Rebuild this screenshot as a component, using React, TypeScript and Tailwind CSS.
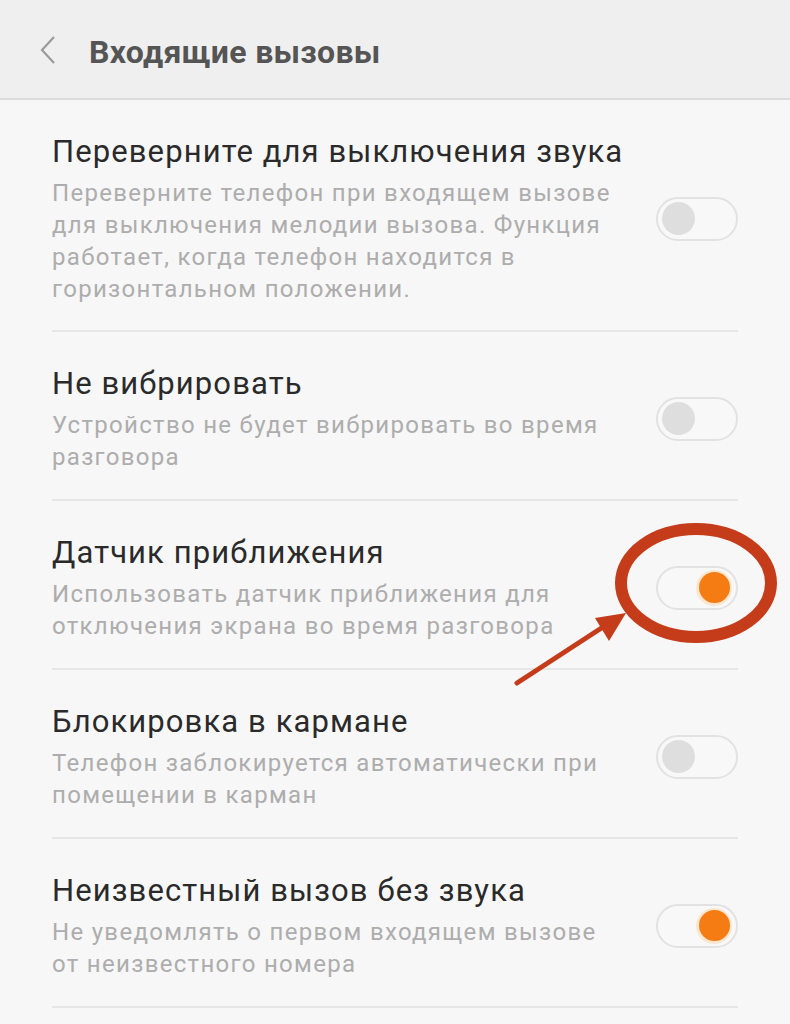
import React from 'react';

const items = [
  {
    title: 'Переверните для выключения звука',
    desc: 'Переверните телефон при входящем вызове для выключения мелодии вызова. Функция работает, когда телефон находится в горизонтальном положении.',
    on: false,
  },
  {
    title: 'Не вибрировать',
    desc: 'Устройство не будет вибрировать во время разговора',
    on: false,
  },
  {
    title: 'Датчик приближения',
    desc: 'Использовать датчик приближения для отключения экрана во время разговора',
    on: true,
  },
  {
    title: 'Блокировка в кармане',
    desc: 'Телефон заблокируется автоматически при помещении в карман',
    on: false,
  },
  {
    title: 'Неизвестный вызов без звука',
    desc: 'Не уведомлять о первом входящем вызове от неизвестного номера',
    on: true,
  },
];

function Toggle({ on }: { on: boolean }) {
  return (
    <div className="w-[82px] h-[44px] shrink-0 rounded-full border-2 border-[#e2e2e2] bg-[#f8f8f8] flex items-center px-[4px]">
      {on ? (
        <div className="ml-auto w-[36px] h-[36px] rounded-full bg-[#fde6cf] flex items-center justify-center">
          <div className="w-[31px] h-[31px] rounded-full bg-[#f57c12]" />
        </div>
      ) : (
        <div className="w-[33px] h-[33px] rounded-full bg-[#dedede]" />
      )}
    </div>
  );
}

export default function App() {
  return (
    <div
      className="relative w-[790px] h-[1024px] overflow-hidden bg-[#f7f7f7]"
      style={{ fontFamily: 'Roboto, "Noto Sans", sans-serif' }}
    >
      {/* Header */}
      <div className="h-[100px] bg-[#efefef] border-b-2 border-[#dcdcdc] flex items-center pl-[38px]">
        <svg width="20" height="30" viewBox="0 0 20 30" className="mt-[2px]">
          <path d="M16 2 L4 15 L16 28" fill="none" stroke="#9a9a9a" strokeWidth="2.2" />
        </svg>
        <div className="ml-[31px] mt-[6px] text-[32px] font-bold tracking-[0.3px] text-[#555555]">Входящие вызовы</div>
      </div>

      {/* List */}
      <div className="px-[52px]">
        {items.map((it) => (
          <div key={it.title} className="flex items-center border-b-2 border-[#e6e6e6] pt-[32px] pb-[26px] first:pb-[25px]">
            <div className="flex-1 pr-[20px]">
              <div className="text-[31px] leading-[40px] tracking-[1.1px] text-[#2a2a2a]">{it.title}</div>
              <div className="max-w-[570px] text-[24px] leading-[32px] tracking-[1.3px] text-[#adadad] mt-[5px]">
                {it.desc}
              </div>
            </div>
            <Toggle on={it.on} />
          </div>
        ))}
      </div>

      {/* Annotation */}
      <svg className="absolute left-0 top-0 pointer-events-none" width="790" height="1024">
        <ellipse cx="696" cy="583" rx="75" ry="54" fill="none" stroke="#c53c1a" strokeWidth="12" />
        <line x1="517" y1="683" x2="603" y2="627" stroke="#c53c1a" strokeWidth="5" strokeLinecap="round" />
        <polygon points="626,613 595,618 609,641" fill="#c53c1a" />
      </svg>
    </div>
  );
}
